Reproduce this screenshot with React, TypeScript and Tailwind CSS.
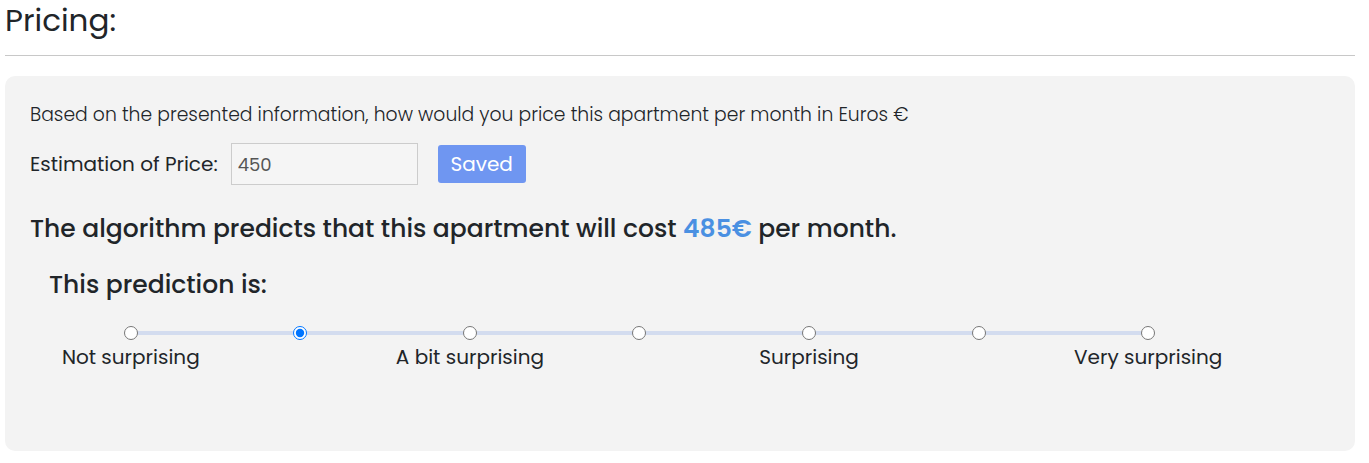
import { useState } from "react";

const SCALE = [
  "Not surprising",
  "",
  "A bit surprising",
  "",
  "Surprising",
  "",
  "Very surprising",
];

function SurpriseScale() {
  const [value, setValue] = useState(1);

  return (
    <div className="relative ml-[16px] grid w-[1187px] grid-cols-7">
      {/* track between the first and last dot */}
      <div className="absolute left-[84.8px] right-[84.8px] top-[11px] h-[4px] bg-[#d3dcef]" />
      {SCALE.map((label, index) => (
        <label key={index} className="relative flex flex-col items-center">
          <input
            type="radio"
            name="surprise"
            checked={value === index}
            onChange={() => setValue(index)}
            className="m-0 mt-[6px] h-[14px] w-[14px] accent-[#0075ff]"
          />
          <span className="mt-[2px] h-[30px] text-[20px] leading-[30px] text-[#212529]">
            {label}
          </span>
        </label>
      ))}
    </div>
  );
}

export default function App() {
  const [price, setPrice] = useState("450");

  return (
    <div className="min-h-screen bg-white pl-[5px] pr-[14px] font-['Poppins','Inter',sans-serif] text-[#212529]">
      <h2 className="pt-[1px] text-[31px] leading-[38px] font-normal">Pricing:</h2>
      <hr className="mt-[16px] border-t border-[#c8c8c8]" />

      <section className="mt-[20px] h-[375px] rounded-[10px] bg-[#f3f3f3] px-[25px] pt-[25px]">
        <p className="text-[18.75px] leading-[28px] font-light">
          Based on the presented information, how would you price this apartment per month in Euros €
        </p>

        <div className="mt-[14px] flex items-center">
          <span className="text-[20px] font-normal">Estimation of Price:</span>
          <input
            value={price}
            onChange={(e) => setPrice(e.target.value)}
            className="ml-[13px] h-[42px] w-[187px] border border-[#cccccc] bg-[#f5f5f5] px-[6px] text-[18px] text-[#555] outline-none"
          />
          <button className="ml-[20px] h-[38px] w-[88px] rounded-[3px] bg-[#6f96f1] text-[20px] text-white">
            Saved
          </button>
        </div>

        <p className="mt-[26px] text-[25px] leading-[36px] font-medium">
          The algorithm predicts that this apartment will cost{" "}
          <span className="font-semibold text-[#4a90e2]">485€</span> per month.
        </p>

        <p className="mt-[20px] pl-[19px] text-[25px] leading-[36px] font-medium">
          This prediction is:
        </p>

        <div className="mt-[17px]">
          <SurpriseScale />
        </div>
      </section>
    </div>
  );
}
